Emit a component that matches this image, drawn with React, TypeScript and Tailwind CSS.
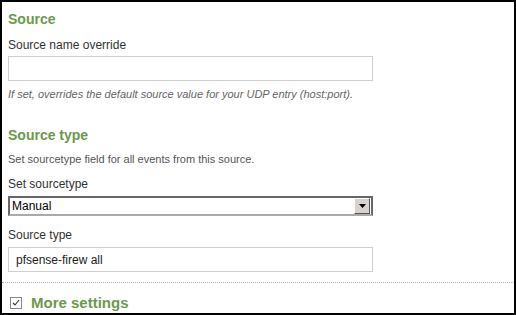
import * as React from "react";

const heading = "font-['Liberation_Sans',Arial,sans-serif] text-[14px] font-bold leading-[16px] text-[#6b9a4b]";
const label = "text-[12px] leading-[14px] text-[#333]";

function TextBox({ value }: { value?: string }) {
  return (
    <div className="flex h-[25px] w-[365px] items-center border border-[#cfcfcf] bg-white px-[7px] text-[12px] text-[#222]">
      {value}
    </div>
  );
}

export default function App() {
  return (
    <div className="h-[315px] w-[516px] overflow-hidden bg-white font-['Liberation_Sans',Arial,sans-serif]">
      <div className="flex h-full flex-col border-2 border-black">
        <div className="flex flex-col pl-[6px]">
          <h2 className={`${heading} mt-[9px]`}>Source</h2>
          <div className={`${label} mt-[11px]`}>Source name override</div>
          <div className="mt-[4px]">
            <TextBox />
          </div>
          <p className="mt-[7px] text-[11px] italic leading-[13px] text-[#666]">
            If set, overrides the default source value for your UDP entry (host:port).
          </p>

          <h2 className={`${heading} mt-[26px]`}>Source type</h2>
          <p className="mt-[10px] text-[11px] leading-[13px] text-[#555]">
            Set sourcetype field for all events from this source.
          </p>
          <div className={`${label} mt-[11px]`}>Set sourcetype</div>
          <div className="mt-[5px] flex h-[20px] w-[365px] items-center border-2 border-[#666] border-b-[#aaa] bg-white">
            <span className="flex-1 pl-[2px] text-[12px] leading-[14px] text-black">Manual</span>
            <span className="mr-px flex h-[16px] w-[16px] items-center justify-center border border-t-white border-l-white border-r-[#555] border-b-[#555] bg-[#d6d3ce]">
              <svg width="7" height="4" viewBox="0 0 7 4">
                <path d="M0 0h7L3.5 4z" fill="#000" />
              </svg>
            </span>
          </div>
          <div className={`${label} mt-[12px]`}>Source type</div>
          <div className="mt-[5px]">
            <TextBox value="pfsense-firew all" />
          </div>
        </div>

        <div className="mt-[10px] border-t border-dotted border-[#b5b5b5]" />

        <div className="mt-[12px] flex items-center pl-[8px]">
          <span className="flex h-[12px] w-[12px] items-center justify-center border border-[#888] bg-white">
            <svg width="8" height="8" viewBox="0 0 8 8">
              <path d="M1 4l2 2 4-5" fill="none" stroke="#333" strokeWidth="1.1" />
            </svg>
          </span>
          <span className={`${heading} ml-[9px] text-[15px]`}>More settings</span>
        </div>
      </div>
    </div>
  );
}
